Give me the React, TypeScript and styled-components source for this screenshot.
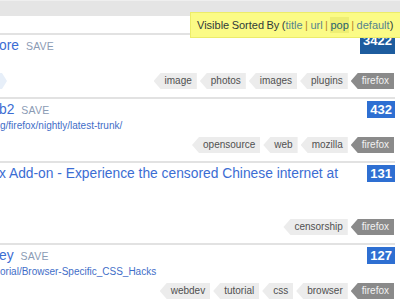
import React from 'react';
import styled, { createGlobalStyle } from 'styled-components';

const GlobalStyle = createGlobalStyle`
  html, body {
    margin: 0;
    padding: 0;
    background: #ffffff;
    overflow: hidden;
  }
  body {
    font-family: "Liberation Sans", Arial, sans-serif;
  }
`;

const Page = styled.div`
  position: relative;
  width: 400px;
  height: 300px;
  overflow: hidden;
`;

const TopBar = styled.div`
  height: 33px;
  background: #ffffff;
`;

const TopBand = styled.div`
  height: 15px;
  background: #e5e5e5;
  border-top: 1px solid #efefef;
`;

const List = styled.div`
  padding-right: 5px;
`;

const Item = styled.div`
  display: grid;
  grid-template-columns: 1fr auto;
  grid-template-rows: auto auto auto;
  border-top: 2px solid #e2e2e2;
  padding: 2px 0 8px 0;
`;

const Main = styled.div`
  grid-column: 1;
  min-width: 0;
`;

const TitleRow = styled.div<{ $lines: number }>`
  display: flex;
  align-items: flex-start;
  gap: 7px;
  height: ${(p) => p.$lines * 18}px;
  white-space: nowrap;
`;

const Title = styled.a<{ $cut: number }>`
  font-size: 13.8px;
  line-height: 18px;
  color: #3b6dd3;
  text-decoration: none;
  margin-left: -${(p) => p.$cut}px;
`;

const Save = styled.span`
  font-size: 10.5px;
  line-height: 18px;
  color: #8b9bb4;
  letter-spacing: 0.2px;
`;

const Url = styled.div`
  height: 14px;
  font-size: 10px;
  line-height: 14px;
  color: #3f6ec8;
  white-space: nowrap;
`;

const Badge = styled.div<{ $dark?: boolean }>`
  grid-column: 2;
  grid-row: 1;
  align-self: start;
  height: ${(p) => (p.$dark ? '18px' : '17px')};
  line-height: ${(p) => (p.$dark ? '10px' : '17px')};
  padding: 0 3px;
  font-size: 13px;
  font-weight: bold;
  color: #ffffff;
  background: ${(p) => (p.$dark ? '#1d5c9e' : '#2e6fd2')};
  margin-top: ${(p) => (p.$dark ? '-1px' : '0')};
`;

const Tags = styled.div`
  grid-column: 1 / -1;
  display: flex;
  justify-content: flex-end;
  align-items: center;
  gap: 3px;
  margin-top: 4px;
  padding-right: 1px;
`;

const Tag = styled.span<{ $main?: boolean }>`
  height: 16px;
  line-height: 16px;
  font-size: 10px;
  padding: 0 5px 0 11px;
  color: ${(p) => (p.$main ? '#f2f2f2' : '#505050')};
  background: ${(p) => (p.$main ? '#8a8a8a' : '#ececec')};
  clip-path: polygon(7px 0, 100% 0, 100% 100%, 7px 100%, 0 50%);
`;

const ViaChip = styled.span`
  margin-right: auto;
  width: 7px;
  height: 16px;
  background: #e7eff9;
  clip-path: polygon(0 0, 2px 0, 100% 50%, 2px 100%, 0 100%);
`;

const SortNotice = styled.div`
  position: absolute;
  top: 12px;
  left: 190px;
  right: -4px;
  height: 24px;
  padding-left: 6px;
  background: #fbfb86;
  border: 1px solid #ecec6a;
  font-size: 11px;
  line-height: 24px;
  word-spacing: -0.6px;
  color: #2f3a3a;
  white-space: nowrap;
`;

const SortLink = styled.a<{ $active?: boolean }>`
  color: ${(p) => (p.$active ? '#24606e' : '#55838e')};
  background: ${(p) => (p.$active ? '#eeee74' : 'transparent')};
  padding: ${(p) => (p.$active ? '2px 0' : '0')};
  text-decoration: none;
`;

const Pipe = styled.span`
  color: #b7832a;
`;

type Bookmark = {
  title: string;
  cut: number;
  url?: string;
  lines?: number;
  count: string;
  dark?: boolean;
  via?: boolean;
  tags: string[];
};

const bookmarks: Bookmark[] = [
  {
    title: 'ore',
    cut: 1,
    count: '3422',
    dark: true,
    via: true,
    tags: ['image', 'photos', 'images', 'plugins'],
  },
  {
    title: 'b2',
    cut: 1,
    url: 'g/firefox/nightly/latest-trunk/',
    count: '432',
    tags: ['opensource', 'web', 'mozilla'],
  },
  {
    title: 'x Add-on - Experience the censored Chinese internet at',
    cut: 1,
    lines: 2,
    count: '131',
    tags: ['censorship'],
  },
  {
    title: 'ey',
    cut: 1,
    url: 'orial/Browser-Specific_CSS_Hacks',
    count: '127',
    tags: ['webdev', 'tutorial', 'css', 'browser'],
  },
];

const App = (): JSX.Element => {
  return (
    <>
      <GlobalStyle />
      <Page>
        <TopBar>
          <TopBand />
        </TopBar>
        <List>
          {bookmarks.map((b) => (
            <Item key={b.count}>
              <Main>
                <TitleRow $lines={b.lines || 1}>
                  <Title href="#" $cut={b.cut}>
                    {b.title}
                  </Title>
                  {!b.lines && <Save>SAVE</Save>}
                </TitleRow>
                <Url>{b.url || ''}</Url>
              </Main>
              <Badge $dark={b.dark}>{b.count}</Badge>
              <Tags>
                {b.via && <ViaChip />}
                {b.tags.map((t) => (
                  <Tag key={t}>{t}</Tag>
                ))}
                <Tag $main>firefox</Tag>
              </Tags>
            </Item>
          ))}
        </List>
        <SortNotice>
          Visible Sorted By (<SortLink href="#">title</SortLink> <Pipe>|</Pipe>{' '}
          <SortLink href="#">url</SortLink> <Pipe>|</Pipe>{' '}
          <SortLink href="#" $active>
            pop
          </SortLink>{' '}
          <Pipe>|</Pipe> <SortLink href="#">default</SortLink>)
        </SortNotice>
      </Page>
    </>
  );
};

export default App;
